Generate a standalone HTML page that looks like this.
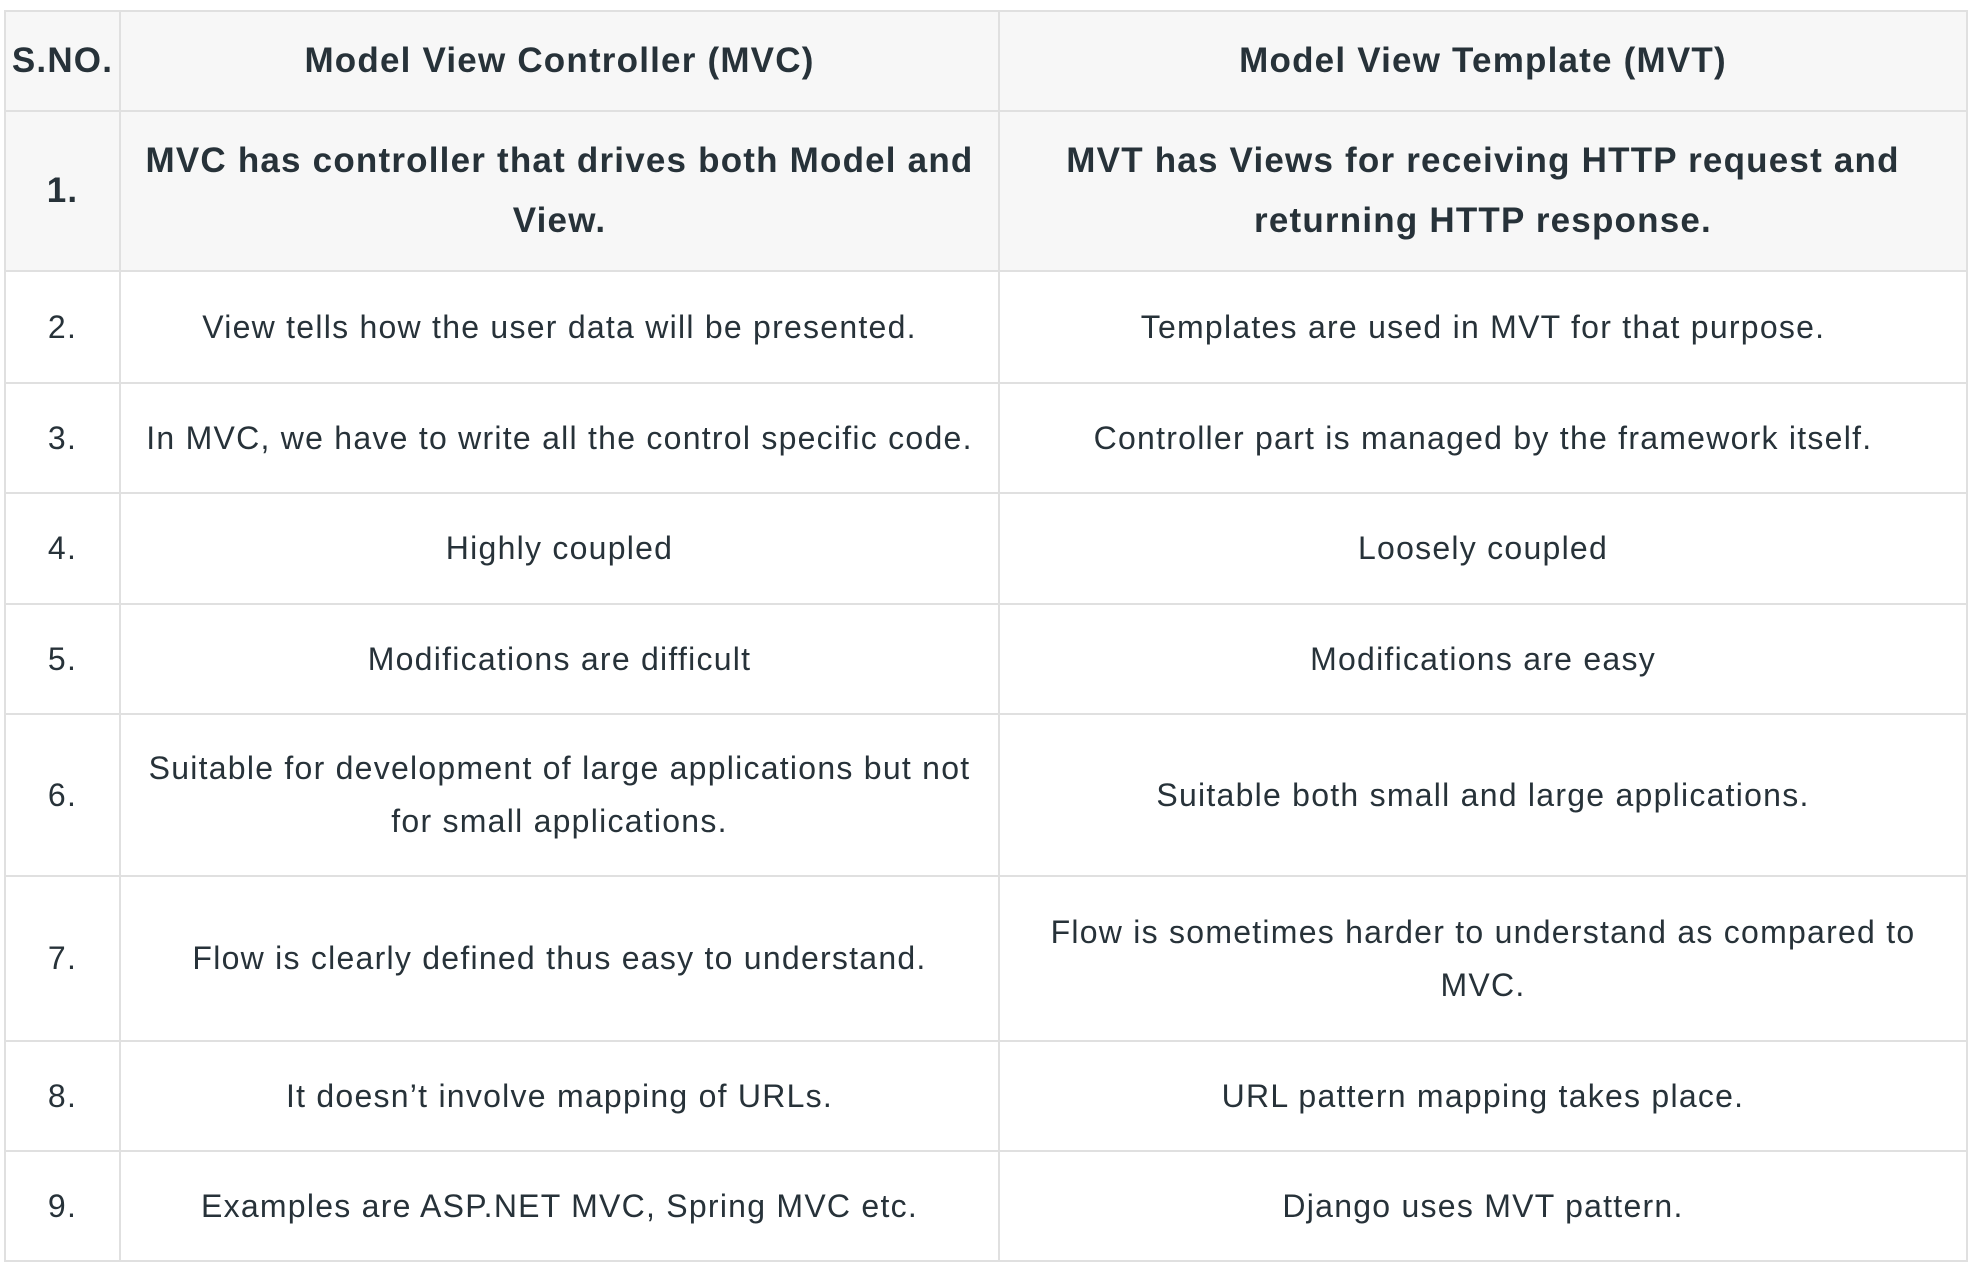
<!DOCTYPE html>
<html><head><style>
html,body{margin:0;padding:0;background:#fff;width:1970px;height:1256px;overflow:hidden}
table{position:absolute;left:4px;top:10px;border-collapse:collapse;width:1962px;font-family:"Liberation Sans",sans-serif;color:#273239;font-size:32px;letter-spacing:1.25px;table-layout:fixed}
td{border:2px solid #e0e0e0;text-align:center;vertical-align:middle;line-height:53px;padding:0 8px}
tr.h td{background:#f7f7f7;font-weight:bold;font-size:35px;letter-spacing:1.2px;line-height:60px}
td:first-child{padding:0}
</style></head><body>
<table>
<colgroup><col style="width:115px"><col style="width:879px"><col style="width:968px"></colgroup>
<tr class="h" style="height:100px"><td>S.NO.</td><td>Model View Controller (MVC)</td><td>Model View Template (MVT)</td></tr>
<tr class="h" style="height:160px"><td>1.</td><td>MVC has controller that drives both Model and View.</td><td>MVT has Views for receiving HTTP request and returning HTTP response.</td></tr>
<tr style="height:112px"><td>2.</td><td>View tells how the user data will be presented.</td><td>Templates are used in MVT for that purpose.</td></tr>
<tr style="height:110px"><td>3.</td><td>In MVC, we have to write all the control specific code.</td><td>Controller part is managed by the framework itself.</td></tr>
<tr style="height:111px"><td>4.</td><td>Highly coupled</td><td>Loosely coupled</td></tr>
<tr style="height:110px"><td>5.</td><td>Modifications are difficult</td><td>Modifications are easy</td></tr>
<tr style="height:162px"><td>6.</td><td>Suitable for development of large applications but not<br>for small applications.</td><td>Suitable both small and large applications.</td></tr>
<tr style="height:165px"><td>7.</td><td>Flow is clearly defined thus easy to understand.</td><td>Flow is sometimes harder to understand as compared to<br>MVC.</td></tr>
<tr style="height:110px"><td>8.</td><td>It doesn’t involve mapping of URLs.</td><td>URL pattern mapping takes place.</td></tr>
<tr style="height:110px"><td>9.</td><td>Examples are ASP.NET MVC, Spring MVC etc.</td><td>Django uses MVT pattern.</td></tr>
</table>
</body></html>
